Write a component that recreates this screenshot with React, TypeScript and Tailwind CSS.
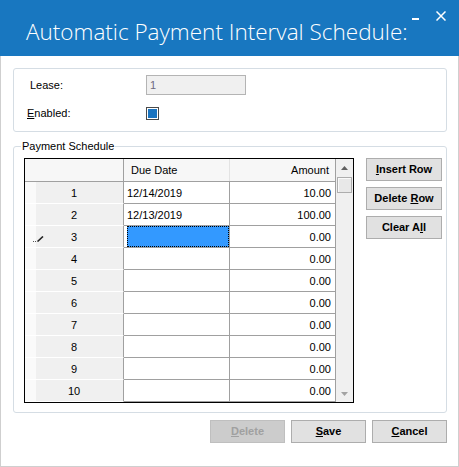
import React from "react"

const rows = [
  { n: 1, date: "12/14/2019", amount: "10.00" },
  { n: 2, date: "12/13/2019", amount: "100.00" },
  { n: 3, date: "", amount: "0.00", editing: true },
  { n: 4, date: "", amount: "0.00" },
  { n: 5, date: "", amount: "0.00" },
  { n: 6, date: "", amount: "0.00" },
  { n: 7, date: "", amount: "0.00" },
  { n: 8, date: "", amount: "0.00" },
  { n: 9, date: "", amount: "0.00" },
  { n: 10, date: "", amount: "0.00" },
]

function SideButton({ children }: { children: React.ReactNode }) {
  return (
    <button className="h-[23px] w-[76px] border border-[#adadad] bg-[#e1e1e1] text-[11px] font-bold text-black">
      {children}
    </button>
  )
}

function Pencil() {
  return (
    <svg width="11" height="6" viewBox="0 0 11 6" className="block">
      <rect x="0" y="5" width="1" height="1" fill="#555" />
      <rect x="2" y="5" width="1" height="1" fill="#555" />
      <path d="M4.5 5.5 L10 0.5" stroke="#222" strokeWidth="1.6" />
    </svg>
  )
}

export default function App() {
  return (
    <div className="w-[459px] h-[467px] bg-white font-['Liberation_Sans',Arial,sans-serif] text-[11px] text-black">
      {/* title bar */}
      <div className="h-[56px] bg-[#1877c0] flex">
        <div className="pl-[26px] pt-[21px] font-['Open_Sans',sans-serif] font-light text-[22.5px] leading-[22px] text-white whitespace-nowrap">
          Automatic Payment Interval Schedule:
        </div>
        <div className="ml-auto flex items-start">
          <div className="mt-[18px] mr-[17px] h-[2px] w-[7px] bg-white" />
          <svg width="10" height="10" viewBox="0 0 10 10" className="mt-[11px] mr-[13px]">
            <path d="M0.5 0.5 L9.5 9.5 M9.5 0.5 L0.5 9.5" stroke="white" strokeWidth="1.5" />
          </svg>
        </div>
      </div>

      {/* body */}
      <div className="h-[411px] border-x border-b border-[#cfcfcf] pl-[12px] flex flex-col">
        {/* lease box */}
        <div className="mt-[12px] h-[64px] w-[434px] rounded-[3px] border border-[#d5dde4] pt-[6px]">
          <div className="flex items-center h-[20px] pl-[16px]">
            <span className="w-[116px]">Lease:</span>
            <div className="h-[20px] w-[100px] border border-[#b4b4b4] bg-[#f0f0f0] pl-[3px] flex items-center text-[#6d6a80]">
              1
            </div>
          </div>
          <div className="mt-[12px] flex items-center h-[13px] pl-[13px]">
            <span className="w-[119px]">
              <span className="underline">E</span>nabled:
            </span>
            <div className="h-[13px] w-[13px] border border-[#4a4a4a] p-[1px] bg-white">
              <div className="h-full w-full bg-[#1a74c0]" />
            </div>
          </div>
        </div>

        {/* payment schedule box */}
        <div className="relative mt-[14px] h-[267px] w-[434px] rounded-[3px] border border-[#d5dde4] flex pl-[10px] pt-[11px]">
          <span className="absolute left-[7px] -top-[8px] bg-white px-[1px] leading-[14px]">Payment Schedule</span>

          {/* grid */}
          <div className="h-[245px] w-[330px] border border-black flex">
            <div className="w-[311px] flex flex-col">
              <div className="h-[23px] flex border-b border-[#a0a0a0] bg-[#f7f7f7]">
                <div className="w-[99px] border-r border-[#a0a0a0]" />
                <div className="w-[106px] border-r border-[#e3e3e3] pl-[7px] flex items-center">Due Date</div>
                <div className="w-[106px] border-r border-[#a0a0a0] pr-[6px] flex items-center justify-end">Amount</div>
              </div>
              {rows.map((r) => (
                <div key={r.n} className="h-[22px] flex">
                  <div className="w-[99px] border-r border-b border-r-[#a0a0a0] border-b-white bg-[linear-gradient(to_right,#fafafa_11px,#f0f0f0_11px)] flex items-center relative">
                    {r.editing && (
                      <span className="absolute left-[8px] top-[10px]">
                        <Pencil />
                      </span>
                    )}
                    <span className="w-full text-center pt-[2px]">{r.n}</span>
                  </div>
                  <div className="w-[106px] border-r border-b border-[#a0a0a0] bg-white flex items-center pl-[3px]">
                    {r.editing ? (
                      <div className="h-full w-[103px] bg-[#3399ff] outline outline-1 outline-dotted outline-black -outline-offset-1" />
                    ) : (
                      <span className="pt-[1px]">{r.date}</span>
                    )}
                  </div>
                  <div className="w-[106px] border-r border-b border-[#a0a0a0] bg-white flex items-center justify-end pr-[4px]">
                    <span className="pt-[1px]">{r.amount}</span>
                  </div>
                </div>
              ))}
            </div>

            {/* scrollbar */}
            <div className="w-[17px] bg-[#f0f0f0] flex flex-col items-center">
              <div className="h-[17px] flex items-center justify-center">
                <svg width="7" height="4" viewBox="0 0 7 4">
                  <path d="M0 4 L3.5 0 L7 4 Z" fill="#606060" />
                </svg>
              </div>
              <div className="mt-[1px] h-[16px] w-[15px] border border-[#adadad] bg-[#e8e8e8] shadow-[inset_1px_1px_0_#fafafa]" />
              <div className="mt-auto h-[17px] flex items-center justify-center">
                <svg width="7" height="4" viewBox="0 0 7 4">
                  <path d="M0 0 L3.5 4 L7 0 Z" fill="#a3a3a3" />
                </svg>
              </div>
            </div>
          </div>

          {/* side buttons */}
          <div className="ml-[12px] flex flex-col gap-[6px]">
            <SideButton>
              <span className="underline">I</span>nsert Row
            </SideButton>
            <SideButton>
              Delete <span className="underline">R</span>ow
            </SideButton>
            <SideButton>
              Clear A<span className="underline">l</span>l
            </SideButton>
          </div>
        </div>

        {/* bottom buttons */}
        <div className="mt-[7px] w-[434px] flex justify-end gap-[6px]">
          <button className="h-[23px] w-[75px] border border-[#bfbfbf] bg-[#cccccc] text-[11px] font-bold text-[#a0a0a0]">
            <span className="underline">D</span>elete
          </button>
          <button className="h-[23px] w-[75px] border border-[#adadad] bg-[#e1e1e1] text-[11px] font-bold">
            <span className="underline">S</span>ave
          </button>
          <button className="h-[23px] w-[75px] border border-[#adadad] bg-[#e1e1e1] text-[11px] font-bold">
            <span className="underline">C</span>ancel
          </button>
        </div>
      </div>
    </div>
  )
}
